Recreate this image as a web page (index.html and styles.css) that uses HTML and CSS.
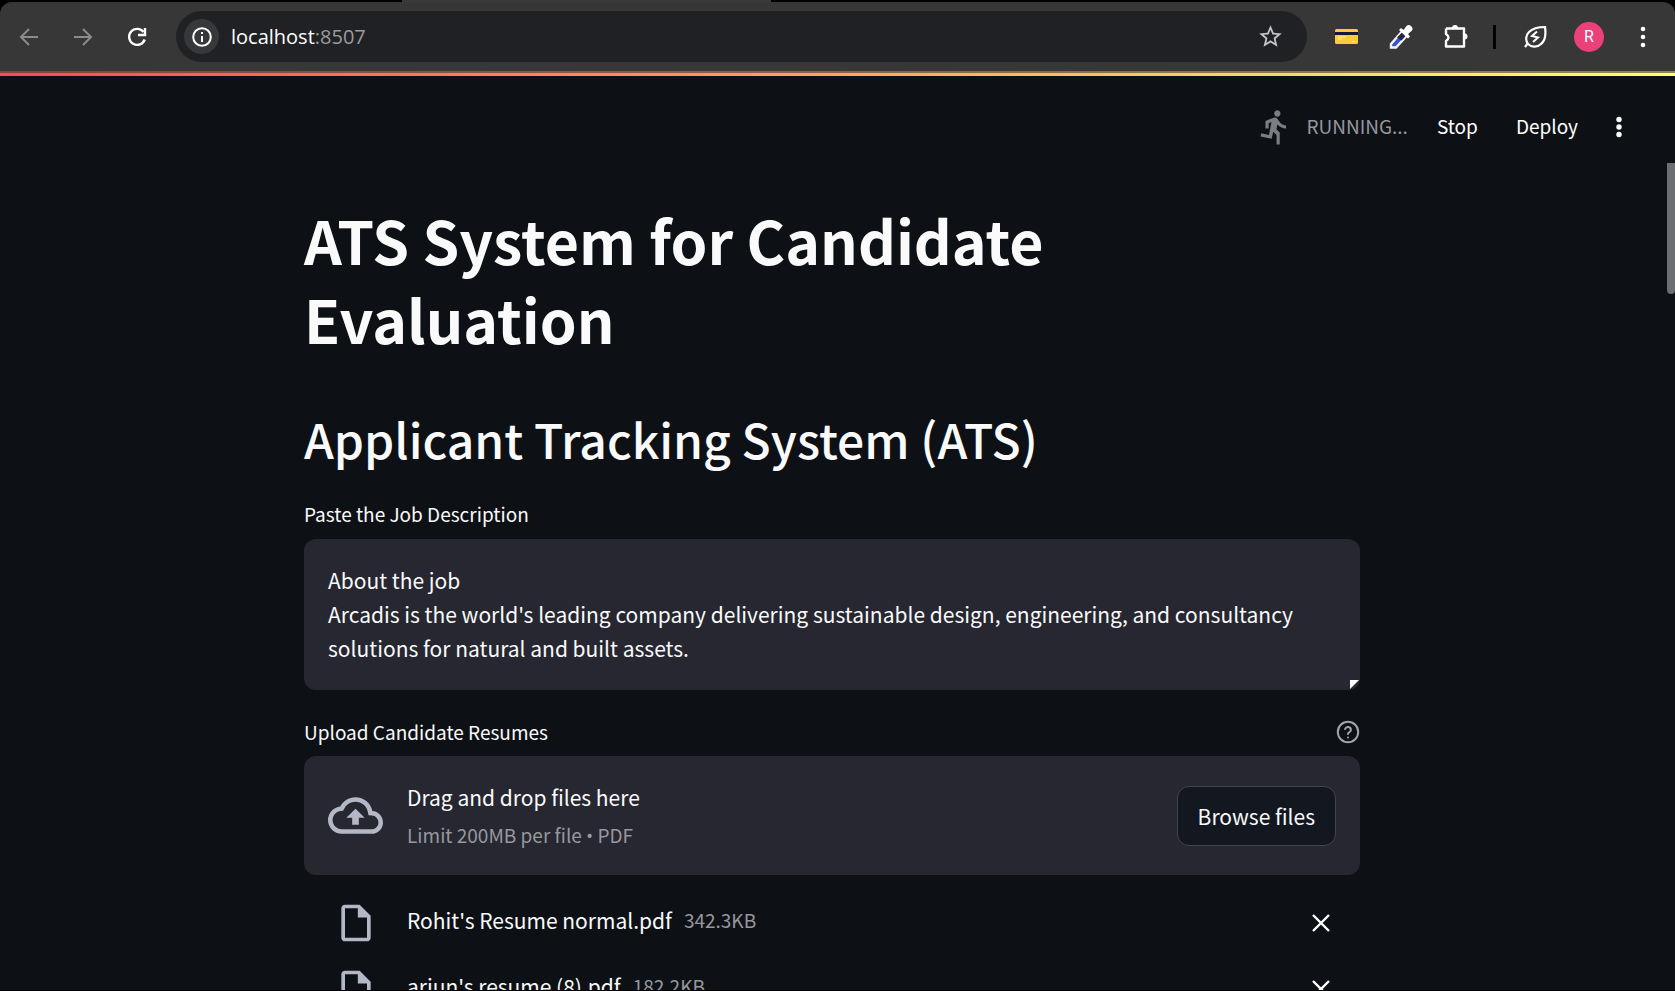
FILE: index.html
```html
<!DOCTYPE html>
<html lang="en">
<head>
<meta charset="utf-8">
<title>ATS System for Candidate Evaluation</title>
<link rel="stylesheet" href="styles.css">
</head>
<body>
<header class="browser">
  <nav class="toolbar" aria-label="Browser">
    <div class="nav-buttons">
      <button class="icon-btn dim" aria-label="Back"><svg width="20" height="20" viewBox="0 0 20 20"><path d="M19 10H2M10 2l-8 8 8 8" fill="none" stroke="currentColor" stroke-width="2"/></svg></button>
      <button class="icon-btn dim" aria-label="Forward"><svg width="20" height="20" viewBox="0 0 20 20"><path d="M1 10h17M10 2l8 8-8 8" fill="none" stroke="currentColor" stroke-width="2"/></svg></button>
      <button class="icon-btn" aria-label="Reload"><svg width="20" height="20" viewBox="0 0 20 20"><path d="M16.500 5A8 8 0 1 0 17.700 12.500" fill="none" stroke="currentColor" stroke-width="2.400"/><path d="M18 1v7h-7" fill="none" stroke="currentColor" stroke-width="2.400"/></svg></button>
    </div>
    <div class="address">
      <button class="site-info" aria-label="Site information"><svg width="20" height="20" viewBox="0 0 20 20"><circle cx="10" cy="10" r="8.800" fill="none" stroke="currentColor" stroke-width="2"/><path d="M9 9h2v6H9zM9 5h2v2H9z" fill="currentColor"/></svg></button>
      <div class="url">localhost<span class="port">:8507</span></div>
      <button class="icon-btn star" aria-label="Bookmark"><svg width="27" height="27" viewBox="0 0 24 24"><path d="M22 9.240l-7.190-.620L12 2 9.190 8.630 2 9.240l5.460 4.730L5.820 21 12 17.270 18.180 21l-1.630-7.030L22 9.240zM12 15.400l-3.760 2.270 1-4.280-3.320-2.880 4.380-.380L12 6.100l1.710 4.040 4.380.380-3.320 2.880 1 4.280L12 15.400z" fill="currentColor"/></svg></button>
    </div>
    <div class="extensions">
      <button class="icon-btn" aria-label="Card extension"><svg width="24" height="24" viewBox="0 0 24 24"><rect x="0" y="4" width="23" height="15" rx="1.500" fill="#fdca3c"/><path d="M0 7h23v3H0z" fill="#16183a"/><path d="M3 12h8M3 14h4M17 16.500h3" stroke="#fff0b8" stroke-width="1"/></svg></button>
      <button class="icon-btn" aria-label="Color picker"><svg width="24" height="26" viewBox="0 0 24 26"><path d="M2 20L13 7.500l4.500 4.500L7 23.500H2z" fill="#3455cc" stroke="#f3f4ff" stroke-width="2.400"/><path d="M8 13.500l5-5 3.500 3.500-4 4.500z" fill="#25283d"/><path d="M10 6l2-2 2.500 2 3-4q2-2 4.500 0t1 4.500l-4 3.500 2 2.500-2 2z" fill="#fff"/></svg></button>
      <button class="icon-btn" aria-label="Extensions"><svg width="26" height="26" viewBox="0 0 26 26"><path d="M3 4.500h18v5.500M21 16v6.500H3v-5.500q5-3.500 0-7V4.500" fill="none" stroke="currentColor" stroke-width="2.400" stroke-linejoin="round"/><path d="M21 9v7" stroke="currentColor" stroke-width="2.400"/><path d="M9 4a3 3 0 0 1 6 0zM21.500 9.500a3 3 0 0 1 0 6z" fill="currentColor"/></svg></button>
      <span class="divider"></span>
      <button class="icon-btn" aria-label="Energy saver"><svg width="24" height="24" viewBox="0 0 24 24"><path d="M22 2c1 7 0 14-4 17-4 4-10 3-13 0-3-4-2-9 1-12 4-4 9-5 16-5zM5 18l-3 4" fill="none" stroke="currentColor" stroke-width="2.200"/><path d="M14 6.500l-5 4.500 6 1.500-5 4.500" fill="none" stroke="currentColor" stroke-width="2"/></svg></button>
      <button class="avatar" aria-label="Profile">R</button>
      <button class="icon-btn" aria-label="Menu"><svg width="6" height="22" viewBox="0 0 6 22"><g fill="currentColor"><circle cx="3" cy="3" r="2.300"/><circle cx="3" cy="11" r="2.300"/><circle cx="3" cy="19" r="2.300"/></g></svg></button>
    </div>
  </nav>
</header>
<div class="decoration"></div>
<div class="app">
  <div class="app-header">
    <div class="status">
      <svg width="38" height="38" viewBox="0 0 24 24"><path d="M13.490 5.480c1.100 0 2-.900 2-2s-.900-2-2-2-2 .900-2 2 .900 2 2 2zm-3.600 13.900l1-4.400 2.100 2v6h2v-7.500l-2.100-2 .600-3c1.300 1.500 3.300 2.500 5.500 2.500v-2c-1.900 0-3.500-1-4.300-2.400l-1-1.600c-.400-.600-1-1-1.700-1-.300 0-.500.100-.800.100l-5.200 2.200v4.700h2v-3.400l1.800-.700-1.600 8.100-4.900-1-.400 2 7 1.400z" fill="currentColor"/></svg>
      <span class="status-text">RUNNING...</span>
    </div>
    <button class="text-btn">Stop</button>
    <button class="text-btn deploy">Deploy</button>
    <button class="icon-btn" aria-label="Main menu"><svg width="6" height="22" viewBox="0 0 6 22"><g fill="currentColor"><circle cx="3" cy="3.500" r="2.700"/><circle cx="3" cy="11" r="2.700"/><circle cx="3" cy="18.500" r="2.700"/></g></svg></button>
  </div>
  <div class="scrollbar"></div>
  <main class="content">
    <h1>ATS System for Candidate Evaluation</h1>
    <h2>Applicant Tracking System (ATS)</h2>
    <label class="label" for="job">Paste the Job Description</label>
    <div class="textarea-wrap">
      <textarea id="job" class="textarea" rows="3" spellcheck="false">About the job
Arcadis is the world's leading company delivering sustainable design, engineering, and consultancy solutions for natural and built assets.</textarea>
      <span class="grip"></span>
    </div>
    <div class="label-row">
      <span class="label" id="upload-label">Upload Candidate Resumes</span>
      <button class="help" aria-label="Help"><svg width="24" height="24" viewBox="0 0 24 24" fill="none" stroke="currentColor" stroke-width="2" stroke-linecap="round"><circle cx="12" cy="12" r="10.200"/><path d="M9.100 9a3 3 0 0 1 5.830 1c0 2-3 2.500-3 4M12 17.500h.010"/></svg></button>
    </div>
    <section class="dropzone" aria-labelledby="upload-label">
      <svg class="cloud" width="55" height="55" viewBox="0 0 24 24"><path d="M19.350 10.040A7.490 7.490 0 0 0 12 4C9.110 4 6.600 5.640 5.350 8.040A5.994 5.994 0 0 0 0 14c0 3.310 2.690 6 6 6h13c2.760 0 5-2.240 5-5 0-2.640-2.050-4.780-4.650-4.960zM19 18H6c-2.210 0-4-1.790-4-4 0-2.050 1.530-3.760 3.560-3.970l1.070-.110.500-.950A5.469 5.469 0 0 1 12 6c2.620 0 4.880 1.860 5.390 4.430l.300 1.500 1.530.110A2.980 2.980 0 0 1 22 15c0 1.650-1.350 3-3 3zM8 13h2.550v3h2.900v-3H16l-4-4z" fill="currentColor"/></svg>
      <div class="drop-text">
        <span class="drop-title">Drag and drop files here</span>
        <span class="small">Limit 200MB per file <span class="bullet">•</span> PDF</span>
      </div>
      <button class="browse">Browse files</button>
    </section>
    <ul class="files">
      <li class="file">
        <svg class="file-icon" width="44" height="44" viewBox="0 0 24 24"><path d="M14 2H6c-1.100 0-1.990.900-1.990 2L4 20c0 1.100.890 2 1.990 2H18c1.100 0 2-.900 2-2V8l-6-6zM6 20V4h7v5h5v11H6z" fill="currentColor"/></svg>
        <div class="file-text"><span class="file-name">Rohit's Resume normal.pdf</span><span class="small">342.3KB</span></div>
        <button class="remove" aria-label="Remove"><svg width="18" height="18" viewBox="0 0 18 18"><path d="M1 1l16 16M17 1L1 17" stroke="currentColor" stroke-width="2.400"/></svg></button>
      </li>
      <li class="file">
        <svg class="file-icon" width="44" height="44" viewBox="0 0 24 24"><path d="M14 2H6c-1.100 0-1.990.900-1.990 2L4 20c0 1.100.890 2 1.990 2H18c1.100 0 2-.900 2-2V8l-6-6zM6 20V4h7v5h5v11H6z" fill="currentColor"/></svg>
        <div class="file-text"><span class="file-name">arjun's resume (8).pdf</span><span class="small">182.2KB</span></div>
        <button class="remove" aria-label="Remove"><svg width="18" height="18" viewBox="0 0 18 18"><path d="M1 1l16 16M17 1L1 17" stroke="currentColor" stroke-width="2.400"/></svg></button>
      </li>
    </ul>
  </main>
</div>
</body>
</html>
```
FILE: styles.css
```css
* { box-sizing: border-box; }
html, body { height: 100%; }
body {
  margin: 0;
  display: flex;
  flex-direction: column;
  overflow: hidden;
  background: #000;
  border-bottom: 1px solid #000;
  color: #fafafa;
  font-family: "Noto Sans CJK SC", "Noto Sans CJK JP", "Open Sans", sans-serif;
  font-size: 21px;
}
button { border: 0; padding: 0; background: none; color: inherit; font: inherit; cursor: pointer; }
svg { display: block; flex: none; }

.browser { position: relative; padding-top: 2px; background: #000; flex: none; }
.browser::before {
  content: "";
  position: absolute;
  left: 24%;
  top: 0;
  width: 22%;
  height: 2px;
  background: #3a3a39;
}
.toolbar {
  display: flex;
  align-items: center;
  height: 69px;
  padding: 0 29px 0 19px;
  background: #373737;
  border-radius: 12px 12px 0 0;
}
.nav-buttons { display: flex; gap: 34px; width: 157px; }
.icon-btn { color: #fff; display: flex; }
.icon-btn.dim { color: #8b8b8b; }
.address {
  flex: 1;
  display: flex;
  align-items: center;
  height: 51px;
  padding: 0 23px 0 8px;
  border-radius: 26px;
  background: #202124;
}
.site-info {
  display: flex;
  align-items: center;
  justify-content: center;
  width: 35px;
  height: 35px;
  border-radius: 50%;
  background: #37383a;
  color: #fff;
}
.url { flex: 1; margin-left: 12px; font: 20px/28px "Open Sans", "Noto Sans", sans-serif; color: #fff; }
.port { color: #9a9b9d; }
.icon-btn.star { color: #c4c5c7; }
.extensions { display: flex; align-items: center; gap: 30px; margin-left: 28px; }
.divider { width: 3px; height: 24px; background: #000; margin: 0 -3px 0 -6px; }
.avatar {
  width: 30px;
  height: 30px;
  margin: 0 6px 0 -3px;
  border-radius: 50%;
  background: #ec407a;
  color: #fff;
  font: 16px/30px Roboto, sans-serif;
}

.decoration {
  flex: none;
  height: 5px;
  border-top: 2px solid rgba(56, 56, 56, 0.6);
  background: linear-gradient(90deg, #ff4b4b, #fffd80) border-box;
}

.app { position: relative; flex: 1; min-height: 0; overflow: hidden; background: #0d1116; padding-right: 11px; }
.app-header {
  display: flex;
  align-items: center;
  justify-content: flex-end;
  height: 102px;
  padding-right: 42px;
}
.status { display: flex; align-items: center; gap: 12px; color: #7b7d81; margin-right: 29px; }
.status-text { color: #95979d; font-size: 19px; line-height: 28px; padding-bottom: 2px; }
.text-btn { font-size: 19px; line-height: 28px; color: #fff; padding-bottom: 2px; }
.deploy { margin: 0 38px; }
.scrollbar {
  position: absolute;
  right: 0;
  top: 87px;
  width: 8px;
  height: 131px;
  border-radius: 0 0 4px 4px;
  background: #6b6e72;
}

.content { display: flex; flex-direction: column; max-width: 1056px; margin: 0 auto; padding-top: 22px; }
h1 { margin: 0; font-size: 59px; line-height: 79px; font-weight: 700; }
h2 { margin: 48px 0 29px; font-size: 48px; line-height: 64px; font-weight: 500; }
.label { font-size: 19px; line-height: 30px; }
.textarea-wrap { position: relative; display: flex; margin: 10px 0 27px; }
.textarea {
  flex: 1;
  min-width: 0;
  display: block;
  padding: 24px 24px 25px;
  border: 0;
  border-radius: 12px;
  outline: 0;
  resize: none;
  overflow: hidden;
  background: #262730;
  color: #fafafa;
  font: inherit;
  line-height: 34px;
}
.grip {
  position: absolute;
  right: 1px;
  bottom: 1px;
  width: 9px;
  height: 9px;
  background: #fff;
  clip-path: polygon(0 0, 100% 0, 0 100%);
}
.label-row { display: flex; justify-content: space-between; align-items: center; margin-bottom: 9px; }
.help { color: #a3a4a9; }
.dropzone {
  display: flex;
  align-items: center;
  gap: 24px;
  min-height: 119px;
  padding: 16px 24px;
  border-radius: 12px;
  background: #262730;
}
.cloud, .file-icon { color: #b4b7c6; }
.drop-text { flex: 1; display: flex; flex-direction: column; gap: 6px; }
.drop-title { line-height: 34px; }
.small { font-size: 19px; line-height: 30px; color: #97989e; }
.bullet { font-family: "Open Sans", sans-serif; }
.browse {
  height: 60px;
  padding: 0 20px;
  border: 1px solid #41444c;
  border-radius: 12px;
  background: #131720;
}
.files { list-style: none; margin: 15px 0 0; padding: 0 30px; }
.file { display: flex; align-items: center; height: 66px; }
.file-text { display: flex; align-items: center; gap: 12px; margin-left: 29px; padding-bottom: 7px; }
.file-name { line-height: 34px; }
.remove { margin-left: auto; color: #fff; }
```
